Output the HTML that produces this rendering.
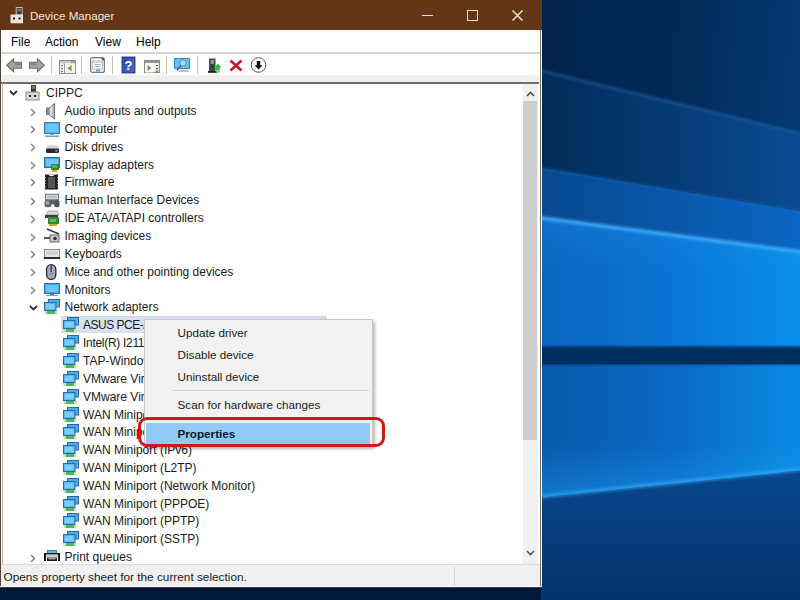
<!DOCTYPE html>
<html><head><meta charset="utf-8">
<style>
*{margin:0;padding:0;box-sizing:border-box}
html,body{width:800px;height:600px;overflow:hidden;background:#021838;font-family:"Liberation Sans",sans-serif;font-size:12px;color:#000}
.abs{position:absolute}
svg{overflow:visible}
#wall{position:absolute;left:541px;top:0;width:259px;height:600px;overflow:hidden}
#win{position:absolute;left:0;top:0;width:541.5px;height:588.3px;background:#fff;overflow:hidden}
#title{position:absolute;left:0;top:0;width:541.5px;height:30px;background:#633618}
.row{position:absolute;height:18px;line-height:18px;white-space:nowrap;color:#1a1a1a}
.sel{background:#d6e2ef;border-top:1px solid #c8d6e6}
.mi{position:absolute;left:32.5px;white-space:nowrap;color:#1a1a1a;font-size:11.7px}
</style></head><body>
<div id="wall">
<svg width="259" height="600" viewBox="0 0 259 600">
<defs>
<linearGradient id="g1" x1="0" y1="0" x2="1" y2="0.25"><stop offset="0" stop-color="#01234c"/><stop offset="0.5" stop-color="#022a56"/><stop offset="1" stop-color="#053a74"/></linearGradient>
<linearGradient id="g2" x1="0" y1="0" x2="1" y2="0"><stop offset="0" stop-color="#022a56"/><stop offset="1" stop-color="#0a4c92"/></linearGradient>
<linearGradient id="g3" x1="0" y1="0" x2="1" y2="0"><stop offset="0" stop-color="#08488e"/><stop offset="1" stop-color="#0a66c4"/></linearGradient>
<linearGradient id="g4" x1="0" y1="0" x2="1" y2="0"><stop offset="0" stop-color="#0a64be"/><stop offset="0.5" stop-color="#0a74d4"/><stop offset="1" stop-color="#0892ea"/></linearGradient>
<linearGradient id="g4v" x1="0" y1="0" x2="0" y2="1"><stop offset="0" stop-color="#20a0ff" stop-opacity="0.2"/><stop offset="0.4" stop-color="#3aa0f0" stop-opacity="0"/></linearGradient>
<linearGradient id="g5" x1="0" y1="0" x2="1" y2="0"><stop offset="0" stop-color="#0958aa"/><stop offset="0.5" stop-color="#0a68c4"/><stop offset="1" stop-color="#0a8ce4"/></linearGradient>
<linearGradient id="g5v" x1="0" y1="0" x2="0" y2="1"><stop offset="0.6" stop-color="#20b0ff" stop-opacity="0"/><stop offset="1" stop-color="#20b0ff" stop-opacity="0.35"/></linearGradient>
<linearGradient id="g6" x1="0" y1="0" x2="0" y2="1"><stop offset="0" stop-color="#08468e"/><stop offset="1" stop-color="#053268"/></linearGradient>
<filter id="bl" x="-10%" y="-100%" width="120%" height="300%"><feGaussianBlur stdDeviation="1.6"/></filter>
<filter id="bl2" x="-10%" y="-10%" width="120%" height="120%"><feGaussianBlur stdDeviation="1.2"/></filter>
</defs>
<rect width="259" height="600" fill="url(#g1)"/>
<g>
<polygon points="-5,69 264,134 264,212 -5,167" fill="url(#g2)"/>
<polygon points="-5,167 264,212 264,252 -5,216" fill="url(#g3)"/>
<polygon points="-5,216 264,252 264,350 -5,350" fill="url(#g4)"/>
<polygon points="-5,216 264,252 264,350 -5,350" fill="url(#g4v)"/>
<polygon points="-5,364 264,364 264,470 -5,498" fill="url(#g5)"/>
<polygon points="-5,364 264,364 264,470 -5,498" fill="url(#g5v)"/>
<polygon points="-5,498 264,470 264,605 -5,605" fill="url(#g6)"/>
</g>
<rect x="-5" y="346.5" width="269" height="18" fill="#042f5e" filter="url(#bl2)"/>
<polygon points="-5,68 264,133 264,136 -5,71" fill="#1a5898" opacity="0.7" filter="url(#bl)"/>
<polygon points="-5,166 264,211 264,213 -5,168" fill="#1a68b8" opacity="0.5" filter="url(#bl)"/>
<polygon points="-5,215.5 264,250.5 264,254 -5,219" fill="#48b4ff" opacity="0.85" filter="url(#bl)"/>
<polygon points="-5,495 264,467 264,471 -5,499" fill="#38b0ff" opacity="0.6" filter="url(#bl)"/>
</svg>
</div>
<div id="win">
 <div id="title">
  <svg class="abs" style="left:9.5px;top:7px" width="14" height="17" viewBox="0 0 14 17"><rect x="6.2" y="0.5" width="6" height="7.5" fill="#3a3a3a" stroke="#cfc6bc" stroke-width="0.9"/><rect x="7.5" y="1.8" width="3.4" height="2.5" fill="#777"/><rect x="0.5" y="7.5" width="12.5" height="8.8" fill="#ece4da"/><rect x="3" y="10.5" width="2" height="2" fill="#1a1a1a"/><rect x="8.5" y="10.5" width="2" height="2" fill="#1a1a1a"/></svg>
  <span class="abs" style="left:30px;top:9px;color:#f4e6d8;font-size:11.6px">Device Manager</span>
  <div class="abs" style="left:422px;top:14.5px;width:11px;height:1.5px;background:#f0dcc8"></div>
  <div class="abs" style="left:466.5px;top:9.5px;width:11px;height:11px;border:1.5px solid #f0dcc8"></div>
  <svg class="abs" style="left:512px;top:10px" width="11" height="11" viewBox="0 0 11 11"><path d="M0.5 0.5 L10.5 10.5 M10.5 0.5 L0.5 10.5" stroke="#f0dcc8" stroke-width="1.5"/></svg>
 </div>
 <div class="abs" style="left:0;top:30px;width:1.2px;height:557px;background:#524438"></div>
 <div class="abs" style="left:540.3px;top:30px;width:1.2px;height:557px;background:#7a6a60"></div>
 <span class="abs" style="left:11px;top:35.2px">File</span>
 <span class="abs" style="left:45px;top:35.2px">Action</span>
 <span class="abs" style="left:95px;top:35.2px">View</span>
 <span class="abs" style="left:136px;top:35.2px">Help</span>
 <div class="abs" style="left:1px;top:52px;width:539px;height:1.5px;background:#d4d4d4"></div>
 <div class="abs" style="left:1px;top:75px;width:539px;height:7px;background:#f0f0f0"></div>
 <div class="abs" style="left:1px;top:82.3px;width:538px;height:1.5px;background:#6e6e6e"></div>
 <div class="abs" style="left:1.5px;top:83px;width:1px;height:481px;background:#b0b0b0"></div>
 <!-- toolbar icons -->
 <svg class="abs" style="left:5.5px;top:58.3px" width="17" height="15" viewBox="0 0 17 15"><path d="M0.8 7.2 L7.5 0.8 V4.2 H15.5 V10.2 H7.5 V13.6 Z" fill="#a4a4a4" stroke="#6a6a6a" stroke-width="1.1"/><path d="M8.5 6.2 H14.5" stroke="#7a7a7a" stroke-width="1.4"/></svg>
 <svg class="abs" style="left:27.8px;top:58.3px" width="17" height="15" viewBox="0 0 17 15"><path d="M16.2 7.2 L9.5 0.8 V4.2 H1.5 V10.2 H9.5 V13.6 Z" fill="#a4a4a4" stroke="#6a6a6a" stroke-width="1.1"/><path d="M2.5 6.2 H8.5" stroke="#7a7a7a" stroke-width="1.4"/></svg>
 <div class="abs" style="left:50.5px;top:56px;width:1px;height:18px;background:#c0c0c0"></div>
 <svg class="abs" style="left:59px;top:60px" width="17" height="14" viewBox="0 0 17 14"><rect x="0.5" y="0.5" width="16" height="13" fill="#f4f4f4" stroke="#8c8c8c"/><rect x="1" y="1" width="15" height="2.5" fill="#c8c8c8"/><rect x="12" y="1.2" width="1.5" height="1.5" fill="#777"/><rect x="14" y="1.2" width="1.5" height="1.5" fill="#777"/><rect x="5" y="3.5" width="1" height="10" fill="#9a9a9a"/><rect x="6" y="3.5" width="10" height="9.5" fill="#f0f6ea"/><path d="M12.5 5 L8.5 8.3 L12.5 11.6 Z" fill="#6aa03a"/><rect x="2" y="5" width="2" height="1.2" fill="#6a7a9a"/><rect x="2" y="8" width="2" height="1.2" fill="#6a7a9a"/><rect x="2" y="11" width="2" height="1.2" fill="#6a7a9a"/></svg>
 <div class="abs" style="left:81px;top:56px;width:1px;height:18px;background:#c0c0c0"></div>
 <svg class="abs" style="left:90px;top:57px" width="15" height="16" viewBox="0 0 15 16"><rect x="0.6" y="0.6" width="13.8" height="14.8" rx="2" fill="#f6f6f6" stroke="#7a7a7a" stroke-width="1.2"/><rect x="2.5" y="4" width="10" height="8" fill="#fff" stroke="#a8b0c0" stroke-width="0.8"/><rect x="3" y="4.5" width="9" height="1.5" fill="#c8d0dc"/><path d="M4.5 7.5 H10.5 M4.5 9.5 H10.5" stroke="#9aa4b8" stroke-width="0.9"/><rect x="6" y="12.5" width="4" height="2" fill="#4aa8d8"/><path d="M11 1.2 L13.8 1.2 L13.8 4 Z" fill="#333"/></svg>
 <div class="abs" style="left:112px;top:56px;width:1px;height:18px;background:#c0c0c0"></div>
 <svg class="abs" style="left:122px;top:57px" width="13" height="16" viewBox="0 0 13 16"><defs><linearGradient id="hb" x1="0" y1="0" x2="1" y2="1"><stop offset="0" stop-color="#2a4aa8"/><stop offset="1" stop-color="#5068c0"/></linearGradient></defs><rect x="0" y="0" width="13" height="16" fill="url(#hb)"/><rect x="0" y="0" width="13" height="16" fill="none" stroke="#1a2a80" stroke-width="0.8"/><text x="6.5" y="12.5" text-anchor="middle" font-family="Liberation Sans" font-weight="bold" font-size="13" fill="#fff">?</text></svg>
 <svg class="abs" style="left:144px;top:60px" width="16" height="13" viewBox="0 0 16 13"><rect x="0.5" y="0.5" width="15" height="12" fill="#eee" stroke="#888"/><rect x="1" y="1" width="14" height="2" fill="#999"/><rect x="1" y="3.5" width="9" height="9" fill="#fff"/><path d="M3.5 5 L7.5 8 L3.5 11 Z" fill="#5aa040"/><rect x="12" y="5" width="2" height="1.2" fill="#555"/><rect x="12" y="8" width="2" height="1.2" fill="#555"/><rect x="12" y="10.5" width="2" height="1.2" fill="#555"/></svg>
 <div class="abs" style="left:165.5px;top:56px;width:1px;height:18px;background:#c0c0c0"></div>
 <svg class="abs" style="left:174px;top:58px" width="16" height="15" viewBox="0 0 16 15"><rect x="0.5" y="0.5" width="15" height="10" fill="#6cc0f0" stroke="#3a88c8"/><circle cx="9" cy="5" r="3.2" fill="#a8dcf8" stroke="#3a88c8" stroke-width="0.9"/><path d="M6.8 7.3 L3 12.5" stroke="#555" stroke-width="1.4"/><rect x="5" y="12.5" width="10" height="1" fill="#888"/></svg>
 <div class="abs" style="left:196.5px;top:56px;width:1px;height:18px;background:#c0c0c0"></div>
 <svg class="abs" style="left:208px;top:57.5px" width="14" height="16" viewBox="0 0 14 16"><rect x="1" y="0.5" width="6.5" height="13" fill="#404844"/><rect x="2.5" y="2" width="3.5" height="4" fill="#8a9490"/><rect x="3.8" y="7" width="1" height="3" fill="#222"/><rect x="0" y="13" width="9" height="1.8" fill="#1a1a1a"/><path d="M6 9.5 L9.8 5.8 L13.6 9.5 H11.8 V12.5 H7.8 V9.5 Z" fill="#2fb84a"/><rect x="7.8" y="13" width="4" height="1.5" fill="#5ad070"/></svg>
 <svg class="abs" style="left:229px;top:59px" width="14" height="13" viewBox="0 0 14 13"><path d="M1.5 1.5 L12.5 11.5 M12.5 1.5 L1.5 11.5" stroke="#d01426" stroke-width="2.6"/></svg>
 <svg class="abs" style="left:250px;top:57px" width="17" height="16" viewBox="0 0 17 16"><circle cx="8.5" cy="8" r="7.3" fill="#fff" stroke="#555" stroke-width="1"/><path d="M8.5 12.5 L4.5 8.3 H6.8 V4 H10.2 V8.3 H12.5 Z" fill="#111"/></svg>
 <!-- tree -->
<svg class="abs" style="left:8.5px;top:90.3px" width="9" height="6" viewBox="0 0 9 6"><path d="M1 1 L4.5 4.5 L8 1" fill="none" stroke="#333" stroke-width="1.8"/></svg>
<svg class="abs" style="left:26px;top:85.3px" width="16" height="16" viewBox="0 0 16 16"><rect x="5" y="0" width="5" height="8" fill="#3a3a3a"/><rect x="6" y="1" width="3" height="3" fill="#777"/><rect x="0" y="7" width="13" height="8" fill="#d8d8d8" stroke="#8a8a8a" stroke-width="1"/><rect x="3" y="10" width="2" height="2" fill="#222"/><rect x="8" y="10" width="2" height="2" fill="#222"/></svg>
<div class="row" style="left:46px;top:84.30px;">CIPPC</div>
<svg class="abs" style="left:30px;top:107.65px" width="6" height="9" viewBox="0 0 6 9"><path d="M1 1 L4.5 4.5 L1 8" fill="none" stroke="#8c8c8c" stroke-width="1.6"/></svg>
<svg class="abs" style="left:44px;top:103.15px" width="16" height="16" viewBox="0 0 16 16"><path d="M2.5 5 H5 L10.5 0.5 V16 L5 11.5 H2.5 Z" fill="#c0c0c0" stroke="#6a6a6a" stroke-width="1"/><rect x="2.5" y="5" width="3" height="6.5" fill="#8a8a8a"/><path d="M7 3 V13" stroke="#e8e8e8" stroke-width="1.2"/></svg>
<div class="row" style="left:64.5px;top:102.15px;">Audio inputs and outputs</div>
<svg class="abs" style="left:30px;top:125.49px" width="6" height="9" viewBox="0 0 6 9"><path d="M1 1 L4.5 4.5 L1 8" fill="none" stroke="#8c8c8c" stroke-width="1.6"/></svg>
<svg class="abs" style="left:44px;top:120.99px" width="16" height="16" viewBox="0 0 16 16"><rect x="0.5" y="1.5" width="15" height="11" fill="#4ab0ee" stroke="#3c7fc0"/><rect x="2" y="3" width="12" height="8" fill="#6cc6f8"/><rect x="6" y="13" width="4" height="1" fill="#8aa"/><rect x="1" y="14.5" width="14" height="1.5" fill="#7a9ab0"/></svg>
<div class="row" style="left:64.5px;top:119.99px;">Computer</div>
<svg class="abs" style="left:30px;top:143.34px" width="6" height="9" viewBox="0 0 6 9"><path d="M1 1 L4.5 4.5 L1 8" fill="none" stroke="#8c8c8c" stroke-width="1.6"/></svg>
<svg class="abs" style="left:44px;top:138.84px" width="16" height="16" viewBox="0 0 16 16"><path d="M2.5 9.7 L3.5 6.3 H13.5 L14.5 9.7 Z" fill="#d4d4d4"/><rect x="2" y="9.5" width="13" height="4.4" rx="0.8" fill="#2a2a2a"/><rect x="11.5" y="10.8" width="1.8" height="2" fill="#8a8a8a"/></svg>
<div class="row" style="left:64.5px;top:137.84px;">Disk drives</div>
<svg class="abs" style="left:30px;top:161.18px" width="6" height="9" viewBox="0 0 6 9"><path d="M1 1 L4.5 4.5 L1 8" fill="none" stroke="#8c8c8c" stroke-width="1.6"/></svg>
<svg class="abs" style="left:44px;top:156.68px" width="16" height="16" viewBox="0 0 16 16"><rect x="0.5" y="0.5" width="15" height="10" fill="#3aa6ec" stroke="#2a70b0"/><rect x="2" y="2" width="12" height="7" fill="#70c8f8"/><rect x="7" y="7" width="8" height="6" fill="#2d8a3a"/><rect x="8" y="8" width="5" height="3" fill="#5ab04a"/><rect x="8" y="13" width="5" height="2" fill="#e8a020"/></svg>
<div class="row" style="left:64.5px;top:155.68px;">Display adapters</div>
<svg class="abs" style="left:30px;top:178.03px" width="6" height="9" viewBox="0 0 6 9"><path d="M1 1 L4.5 4.5 L1 8" fill="none" stroke="#8c8c8c" stroke-width="1.6"/></svg>
<svg class="abs" style="left:44px;top:173.53px" width="16" height="16" viewBox="0 0 16 16"><rect x="1" y="0.5" width="13" height="15" fill="#222"/><path d="M4 0.5 Q7.5 4 11 0.5" fill="#fff"/><rect x="0" y="3" width="1.5" height="1" fill="#fff"/><rect x="0" y="6" width="1.5" height="1" fill="#fff"/><rect x="0" y="9" width="1.5" height="1" fill="#fff"/><rect x="0" y="12" width="1.5" height="1" fill="#fff"/><rect x="13.5" y="3" width="1.5" height="1" fill="#fff"/><rect x="13.5" y="6" width="1.5" height="1" fill="#fff"/><rect x="13.5" y="9" width="1.5" height="1" fill="#fff"/><rect x="13.5" y="12" width="1.5" height="1" fill="#fff"/><rect x="4" y="3" width="7" height="11" fill="#555"/></svg>
<div class="row" style="left:64.5px;top:172.53px;">Firmware</div>
<svg class="abs" style="left:30px;top:196.88px" width="6" height="9" viewBox="0 0 6 9"><path d="M1 1 L4.5 4.5 L1 8" fill="none" stroke="#8c8c8c" stroke-width="1.6"/></svg>
<svg class="abs" style="left:44px;top:192.38px" width="16" height="16" viewBox="0 0 16 16"><g transform="translate(0,0.8)"><rect x="1.5" y="1.5" width="13" height="5.5" fill="#dfe6ec" stroke="#6a7480" stroke-width="1"/><path d="M3 3.5 H13 M3 5 H13" stroke="#9aa4ae" stroke-width="0.8"/><rect x="0.5" y="7" width="7" height="7.5" rx="2.5" fill="#5a6878"/><rect x="2" y="8.5" width="3" height="3" fill="#a8b4c0"/><rect x="10" y="7" width="5.5" height="7.5" rx="2.5" fill="#485666"/><rect x="6.5" y="7" width="4" height="4.5" fill="#6a5a50"/></g></svg>
<div class="row" style="left:64.5px;top:191.38px;">Human Interface Devices</div>
<svg class="abs" style="left:30px;top:214.72px" width="6" height="9" viewBox="0 0 6 9"><path d="M1 1 L4.5 4.5 L1 8" fill="none" stroke="#8c8c8c" stroke-width="1.6"/></svg>
<svg class="abs" style="left:44px;top:210.22px" width="16" height="16" viewBox="0 0 16 16"><path d="M2 5 L4 1 H13 L15 5 Z" fill="#d8d8d8" stroke="#999" stroke-width="0.8"/><rect x="1" y="5" width="13" height="3" fill="#3a3a3a"/><rect x="4" y="7" width="11" height="7" fill="#2f8a3a"/><rect x="6" y="9" width="6" height="3" fill="#6ab858"/><rect x="5" y="14" width="8" height="2" fill="#d0a030"/></svg>
<div class="row" style="left:64.5px;top:209.22px;">IDE ATA/ATAPI controllers</div>
<svg class="abs" style="left:30px;top:232.57px" width="6" height="9" viewBox="0 0 6 9"><path d="M1 1 L4.5 4.5 L1 8" fill="none" stroke="#8c8c8c" stroke-width="1.6"/></svg>
<svg class="abs" style="left:44px;top:228.07px" width="16" height="16" viewBox="0 0 16 16"><path d="M3 1 L15 6" stroke="#333" stroke-width="1.5"/><rect x="6" y="7" width="9" height="7" fill="#c8c8c8" stroke="#666"/><circle cx="11" cy="10.5" r="1.8" fill="#333"/><rect x="0" y="9" width="6" height="2" fill="#555"/></svg>
<div class="row" style="left:64.5px;top:227.07px;">Imaging devices</div>
<svg class="abs" style="left:30px;top:250.41px" width="6" height="9" viewBox="0 0 6 9"><path d="M1 1 L4.5 4.5 L1 8" fill="none" stroke="#8c8c8c" stroke-width="1.6"/></svg>
<svg class="abs" style="left:44px;top:245.91px" width="16" height="16" viewBox="0 0 16 16"><rect x="0.5" y="3.5" width="15" height="8" fill="#e6e6e6" stroke="#8a8a8a"/><rect x="0" y="11" width="16" height="2" fill="#2a2a2a"/><path d="M2 6 H14 M2 8 H14" stroke="#b8b8b8" stroke-width="1"/></svg>
<div class="row" style="left:64.5px;top:244.91px;">Keyboards</div>
<svg class="abs" style="left:30px;top:268.26px" width="6" height="9" viewBox="0 0 6 9"><path d="M1 1 L4.5 4.5 L1 8" fill="none" stroke="#8c8c8c" stroke-width="1.6"/></svg>
<svg class="abs" style="left:44px;top:263.76px" width="16" height="16" viewBox="0 0 16 16"><rect x="2.6" y="0.6" width="9.2" height="14.8" rx="4.6" fill="#a0aab8" stroke="#2a2a2a" stroke-width="1.3"/><rect x="6.6" y="1.5" width="1.2" height="6.5" fill="#333"/><path d="M4.5 9 Q7 13 10 9" fill="#7a8494"/></svg>
<div class="row" style="left:64.5px;top:262.76px;">Mice and other pointing devices</div>
<svg class="abs" style="left:30px;top:286.11px" width="6" height="9" viewBox="0 0 6 9"><path d="M1 1 L4.5 4.5 L1 8" fill="none" stroke="#8c8c8c" stroke-width="1.6"/></svg>
<svg class="abs" style="left:44px;top:281.61px" width="16" height="16" viewBox="0 0 16 16"><rect x="0.5" y="1.5" width="15" height="10" fill="#3aa6ec" stroke="#2a70b0"/><rect x="2" y="3" width="12" height="7" fill="#6ac4f8"/><rect x="6" y="12" width="4" height="1" fill="#678"/><rect x="2" y="13" width="12" height="1" fill="#89a"/></svg>
<div class="row" style="left:64.5px;top:280.61px;">Monitors</div>
<svg class="abs" style="left:28.5px;top:305.45px" width="9" height="6" viewBox="0 0 9 6"><path d="M1 1 L4.5 4.5 L8 1" fill="none" stroke="#333" stroke-width="1.8"/></svg>
<svg class="abs" style="left:44px;top:299.45px" width="16" height="16" viewBox="0 0 16 16"><rect x="4.5" y="0.5" width="11" height="7.5" fill="#4aaeea" stroke="#2a6aa8"/><rect x="0.5" y="3.5" width="11.5" height="8" fill="#5ab8f0" stroke="#2a6aa8"/><rect x="2" y="5" width="8.5" height="5" fill="#80ccf8"/><rect x="0.5" y="12" width="13" height="3" fill="#c8d8c8"/><rect x="3" y="12" width="8" height="3" fill="#4cb850"/></svg>
<div class="row" style="left:64.5px;top:298.45px;">Network adapters</div>
<div class="abs sel" style="left:60.5px;top:315.50px;width:266px;height:17.5px"></div>
<svg class="abs" style="left:63px;top:317.3px" width="16" height="16" viewBox="0 0 16 16"><rect x="4.5" y="0.5" width="11" height="7.5" fill="#4aaeea" stroke="#2a6aa8"/><rect x="0.5" y="3.5" width="11.5" height="8" fill="#5ab8f0" stroke="#2a6aa8"/><rect x="2" y="5" width="8.5" height="5" fill="#80ccf8"/><rect x="0.5" y="12" width="13" height="3" fill="#c8d8c8"/><rect x="3" y="12" width="8" height="3" fill="#4cb850"/></svg>
<div class="row" style="left:83px;top:316.30px;letter-spacing:-0.5px;">ASUS PCE-AC88 802.11ac Network Adapter</div>
<svg class="abs" style="left:63px;top:335.14px" width="16" height="16" viewBox="0 0 16 16"><rect x="4.5" y="0.5" width="11" height="7.5" fill="#4aaeea" stroke="#2a6aa8"/><rect x="0.5" y="3.5" width="11.5" height="8" fill="#5ab8f0" stroke="#2a6aa8"/><rect x="2" y="5" width="8.5" height="5" fill="#80ccf8"/><rect x="0.5" y="12" width="13" height="3" fill="#c8d8c8"/><rect x="3" y="12" width="8" height="3" fill="#4cb850"/></svg>
<div class="row" style="left:83px;top:334.14px;letter-spacing:-0.3px;">Intel(R) I211 Gigabit Network Connection</div>
<svg class="abs" style="left:63px;top:352.99px" width="16" height="16" viewBox="0 0 16 16"><rect x="4.5" y="0.5" width="11" height="7.5" fill="#4aaeea" stroke="#2a6aa8"/><rect x="0.5" y="3.5" width="11.5" height="8" fill="#5ab8f0" stroke="#2a6aa8"/><rect x="2" y="5" width="8.5" height="5" fill="#80ccf8"/><rect x="0.5" y="12" width="13" height="3" fill="#c8d8c8"/><rect x="3" y="12" width="8" height="3" fill="#4cb850"/></svg>
<div class="row" style="left:83px;top:351.99px;">TAP-Windows Adapter V9</div>
<svg class="abs" style="left:63px;top:370.84px" width="16" height="16" viewBox="0 0 16 16"><rect x="4.5" y="0.5" width="11" height="7.5" fill="#4aaeea" stroke="#2a6aa8"/><rect x="0.5" y="3.5" width="11.5" height="8" fill="#5ab8f0" stroke="#2a6aa8"/><rect x="2" y="5" width="8.5" height="5" fill="#80ccf8"/><rect x="0.5" y="12" width="13" height="3" fill="#c8d8c8"/><rect x="3" y="12" width="8" height="3" fill="#4cb850"/></svg>
<div class="row" style="left:83px;top:369.84px;">VMware Virtual Ethernet Adapter for VMnet1</div>
<svg class="abs" style="left:63px;top:388.68px" width="16" height="16" viewBox="0 0 16 16"><rect x="4.5" y="0.5" width="11" height="7.5" fill="#4aaeea" stroke="#2a6aa8"/><rect x="0.5" y="3.5" width="11.5" height="8" fill="#5ab8f0" stroke="#2a6aa8"/><rect x="2" y="5" width="8.5" height="5" fill="#80ccf8"/><rect x="0.5" y="12" width="13" height="3" fill="#c8d8c8"/><rect x="3" y="12" width="8" height="3" fill="#4cb850"/></svg>
<div class="row" style="left:83px;top:387.68px;">VMware Virtual Ethernet Adapter for VMnet8</div>
<svg class="abs" style="left:63px;top:406.53px" width="16" height="16" viewBox="0 0 16 16"><rect x="4.5" y="0.5" width="11" height="7.5" fill="#4aaeea" stroke="#2a6aa8"/><rect x="0.5" y="3.5" width="11.5" height="8" fill="#5ab8f0" stroke="#2a6aa8"/><rect x="2" y="5" width="8.5" height="5" fill="#80ccf8"/><rect x="0.5" y="12" width="13" height="3" fill="#c8d8c8"/><rect x="3" y="12" width="8" height="3" fill="#4cb850"/></svg>
<div class="row" style="left:83px;top:405.53px;">WAN Miniport (IKEv2)</div>
<svg class="abs" style="left:63px;top:424.37px" width="16" height="16" viewBox="0 0 16 16"><rect x="4.5" y="0.5" width="11" height="7.5" fill="#4aaeea" stroke="#2a6aa8"/><rect x="0.5" y="3.5" width="11.5" height="8" fill="#5ab8f0" stroke="#2a6aa8"/><rect x="2" y="5" width="8.5" height="5" fill="#80ccf8"/><rect x="0.5" y="12" width="13" height="3" fill="#c8d8c8"/><rect x="3" y="12" width="8" height="3" fill="#4cb850"/></svg>
<div class="row" style="left:83px;top:423.37px;">WAN Miniport (IP)</div>
<svg class="abs" style="left:63px;top:442.22px" width="16" height="16" viewBox="0 0 16 16"><rect x="4.5" y="0.5" width="11" height="7.5" fill="#4aaeea" stroke="#2a6aa8"/><rect x="0.5" y="3.5" width="11.5" height="8" fill="#5ab8f0" stroke="#2a6aa8"/><rect x="2" y="5" width="8.5" height="5" fill="#80ccf8"/><rect x="0.5" y="12" width="13" height="3" fill="#c8d8c8"/><rect x="3" y="12" width="8" height="3" fill="#4cb850"/></svg>
<div class="row" style="left:83px;top:441.22px;">WAN Miniport (IPv6)</div>
<svg class="abs" style="left:63px;top:460.07px" width="16" height="16" viewBox="0 0 16 16"><rect x="4.5" y="0.5" width="11" height="7.5" fill="#4aaeea" stroke="#2a6aa8"/><rect x="0.5" y="3.5" width="11.5" height="8" fill="#5ab8f0" stroke="#2a6aa8"/><rect x="2" y="5" width="8.5" height="5" fill="#80ccf8"/><rect x="0.5" y="12" width="13" height="3" fill="#c8d8c8"/><rect x="3" y="12" width="8" height="3" fill="#4cb850"/></svg>
<div class="row" style="left:83px;top:459.07px;">WAN Miniport (L2TP)</div>
<svg class="abs" style="left:63px;top:477.91px" width="16" height="16" viewBox="0 0 16 16"><rect x="4.5" y="0.5" width="11" height="7.5" fill="#4aaeea" stroke="#2a6aa8"/><rect x="0.5" y="3.5" width="11.5" height="8" fill="#5ab8f0" stroke="#2a6aa8"/><rect x="2" y="5" width="8.5" height="5" fill="#80ccf8"/><rect x="0.5" y="12" width="13" height="3" fill="#c8d8c8"/><rect x="3" y="12" width="8" height="3" fill="#4cb850"/></svg>
<div class="row" style="left:83px;top:476.91px;">WAN Miniport (Network Monitor)</div>
<svg class="abs" style="left:63px;top:495.76px" width="16" height="16" viewBox="0 0 16 16"><rect x="4.5" y="0.5" width="11" height="7.5" fill="#4aaeea" stroke="#2a6aa8"/><rect x="0.5" y="3.5" width="11.5" height="8" fill="#5ab8f0" stroke="#2a6aa8"/><rect x="2" y="5" width="8.5" height="5" fill="#80ccf8"/><rect x="0.5" y="12" width="13" height="3" fill="#c8d8c8"/><rect x="3" y="12" width="8" height="3" fill="#4cb850"/></svg>
<div class="row" style="left:83px;top:494.76px;">WAN Miniport (PPPOE)</div>
<svg class="abs" style="left:63px;top:512.9px" width="16" height="16" viewBox="0 0 16 16"><rect x="4.5" y="0.5" width="11" height="7.5" fill="#4aaeea" stroke="#2a6aa8"/><rect x="0.5" y="3.5" width="11.5" height="8" fill="#5ab8f0" stroke="#2a6aa8"/><rect x="2" y="5" width="8.5" height="5" fill="#80ccf8"/><rect x="0.5" y="12" width="13" height="3" fill="#c8d8c8"/><rect x="3" y="12" width="8" height="3" fill="#4cb850"/></svg>
<div class="row" style="left:83px;top:511.90px;">WAN Miniport (PPTP)</div>
<svg class="abs" style="left:63px;top:531.45px" width="16" height="16" viewBox="0 0 16 16"><rect x="4.5" y="0.5" width="11" height="7.5" fill="#4aaeea" stroke="#2a6aa8"/><rect x="0.5" y="3.5" width="11.5" height="8" fill="#5ab8f0" stroke="#2a6aa8"/><rect x="2" y="5" width="8.5" height="5" fill="#80ccf8"/><rect x="0.5" y="12" width="13" height="3" fill="#c8d8c8"/><rect x="3" y="12" width="8" height="3" fill="#4cb850"/></svg>
<div class="row" style="left:83px;top:530.45px;">WAN Miniport (SSTP)</div>
<svg class="abs" style="left:30px;top:553.8px" width="6" height="9" viewBox="0 0 6 9"><path d="M1 1 L4.5 4.5 L1 8" fill="none" stroke="#8c8c8c" stroke-width="1.6"/></svg>
<svg class="abs" style="left:44px;top:549.3px" width="16" height="16" viewBox="0 0 16 16"><rect x="3.5" y="1.5" width="9" height="3" fill="#5ab8e8" stroke="#2a6a98" stroke-width="0.8"/><rect x="0" y="4" width="16" height="1.6" fill="#1a1a1a"/><rect x="0" y="4" width="2" height="8" fill="#1a1a1a"/><rect x="14" y="4" width="2" height="8" fill="#1a1a1a"/><rect x="2" y="5.6" width="12" height="2.4" fill="#d0d0d0"/><rect x="3" y="8.5" width="10" height="3.5" fill="#1a1a1a"/><rect x="4.5" y="9.3" width="7" height="1" fill="#e8e8e8"/></svg>
<div class="row" style="left:64.5px;top:548.30px;">Print queues</div>
 <!-- scrollbar -->
 <div class="abs" style="left:523px;top:84px;width:15px;height:480px;background:#f0f0f0"></div>
 <div class="abs" style="left:523px;top:101px;width:14px;height:339px;background:#cdcdcd"></div>
 <svg class="abs" style="left:526px;top:90.5px" width="9" height="6" viewBox="0 0 9 6"><path d="M1 5 L4.5 1.5 L8 5" fill="none" stroke="#505050" stroke-width="1.6"/></svg>
 <svg class="abs" style="left:526px;top:550px" width="9" height="6" viewBox="0 0 9 6"><path d="M1 1 L4.5 4.5 L8 1" fill="none" stroke="#505050" stroke-width="1.6"/></svg>
 <!-- status -->
 <div class="abs" style="left:1px;top:563.5px;width:539px;height:1.5px;background:#dcdcdc"></div>
 <div class="abs" style="left:1px;top:565px;width:539px;height:22px;background:#f0f0f0"></div>
 <div class="abs" style="left:453.5px;top:567px;width:1px;height:19px;background:#d0d0d0"></div>
 <div class="abs" style="left:0;top:585.5px;width:541px;height:1.2px;background:#fbf8f6"></div><div class="abs" style="left:0;top:586.8px;width:541.5px;height:1.5px;background:#3e3c40"></div>
 <span class="abs" style="left:3.5px;top:570px;white-space:nowrap;color:#1a1a1a;font-size:11.8px">Opens property sheet for the current selection.</span>
</div>
<!-- context menu -->
<div class="abs" style="left:147px;top:322px;width:228px;height:127px;background:rgba(0,0,0,0.28);filter:blur(1.5px)"></div>
<div class="abs" style="left:144px;top:319px;width:229px;height:128px;background:#f2f2f2;border:1px solid #c8c8c8">
 <span class="mi" style="top:6px">Update driver</span>
 <span class="mi" style="top:28px">Disable device</span>
 <span class="mi" style="top:50px">Uninstall device</span>
 <div class="abs" style="left:28px;top:70px;width:196px;height:1px;background:#d4d4d4"></div>
 <span class="mi" style="top:78px">Scan for hardware changes</span>
 <div class="abs" style="left:1px;top:103px;width:224px;height:21px;background:#91c9f7"></div>
 <span class="mi" style="top:107px;font-weight:bold;color:#0c1a2c">Properties</span>
</div>
<div class="abs" style="left:137.5px;top:416.5px;width:247.5px;height:30.5px;border:3.3px solid #d2161e;border-radius:9px"></div>
</body></html>
